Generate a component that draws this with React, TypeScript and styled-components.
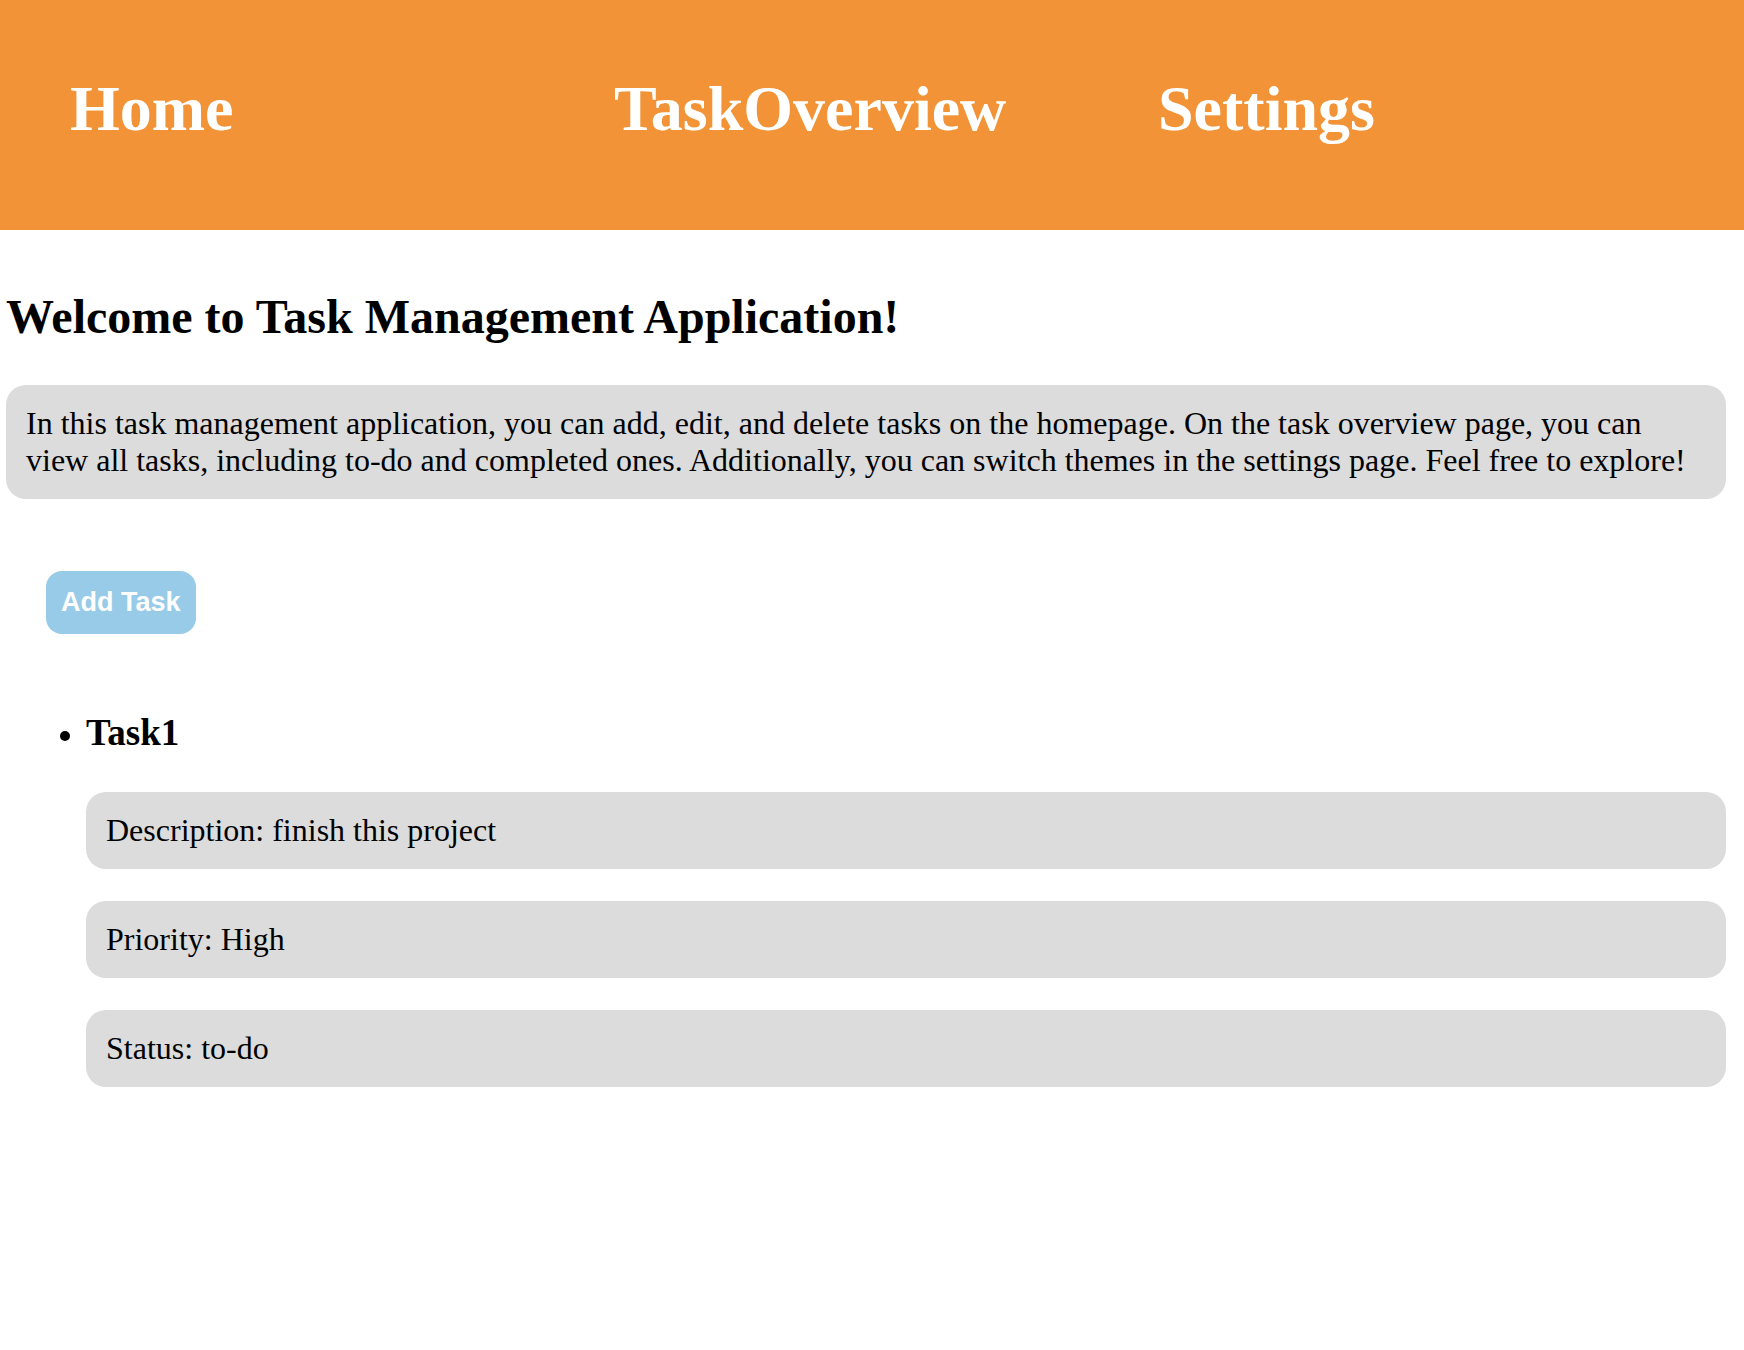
import React from "react";
import styled, { createGlobalStyle } from "styled-components";

const GlobalStyle = createGlobalStyle`
  body {
    margin: 0;
    background: #fff;
    color: #000;
    font-family: "Liberation Serif", "Times New Roman", serif;
    font-size: 32px;
    line-height: 37px;
  }
`;

const Header = styled.header`
  background: #f19336;
  padding: 72px 42px 84px 70px;
`;

const Nav = styled.nav`
  display: grid;
  grid-template-columns: repeat(3, 1fr);
`;

const NavLink = styled.a`
  justify-self: start;
  color: #fff;
  font-size: 64px;
  font-weight: 700;
  line-height: 74px;
  text-decoration: none;
`;

const Main = styled.main`
  padding: 59px 18px 40px 6px;
`;

const Title = styled.h2`
  margin: 0 0 41px;
  font-size: 48px;
  line-height: 55px;
`;

const Panel = styled.p`
  margin: 0;
  padding: 20px;
  border-radius: 20px;
  background: #dcdcdc;
`;

const AddButton = styled.button`
  display: block;
  margin: 72px 40px 77px;
  padding: 16px 15px;
  border: 0;
  border-radius: 16px;
  background: #97cbe7;
  color: #fff;
  font-family: "Liberation Sans", Arial, sans-serif;
  font-size: 27px;
  font-weight: 700;
  line-height: 31px;
  cursor: pointer;
`;

const TaskList = styled.ul`
  margin: 0;
  padding: 0 0 0 80px;
`;

const TaskName = styled.h3`
  margin: 0 0 38px;
  font-size: 37px;
  line-height: 43px;
`;

const TaskDetails = styled.div`
  display: grid;
  gap: 32px;
`;

const pages = ["Home", "TaskOverview", "Settings"];

const tasks = [
  {
    name: "Task1",
    description: "finish this project",
    priority: "High",
    status: "to-do",
  },
];

export default function App() {
  return (
    <>
      <GlobalStyle />
      <Header>
        <Nav>
          {pages.map((page) => (
            <NavLink key={page} href={`#${page}`}>
              {page}
            </NavLink>
          ))}
        </Nav>
      </Header>
      <Main>
        <Title>Welcome to Task Management Application!</Title>
        <Panel>
          In this task management application, you can add, edit, and delete
          tasks on the homepage. On the task overview page, you can view all
          tasks, including to-do and completed ones. Additionally, you can
          switch themes in the settings page. Feel free to explore!
        </Panel>
        <AddButton type="button">Add Task</AddButton>
        <TaskList>
          {tasks.map((task) => (
            <li key={task.name}>
              <TaskName>{task.name}</TaskName>
              <TaskDetails>
                <Panel>Description: {task.description}</Panel>
                <Panel>Priority: {task.priority}</Panel>
                <Panel>Status: {task.status}</Panel>
              </TaskDetails>
            </li>
          ))}
        </TaskList>
      </Main>
    </>
  );
}
